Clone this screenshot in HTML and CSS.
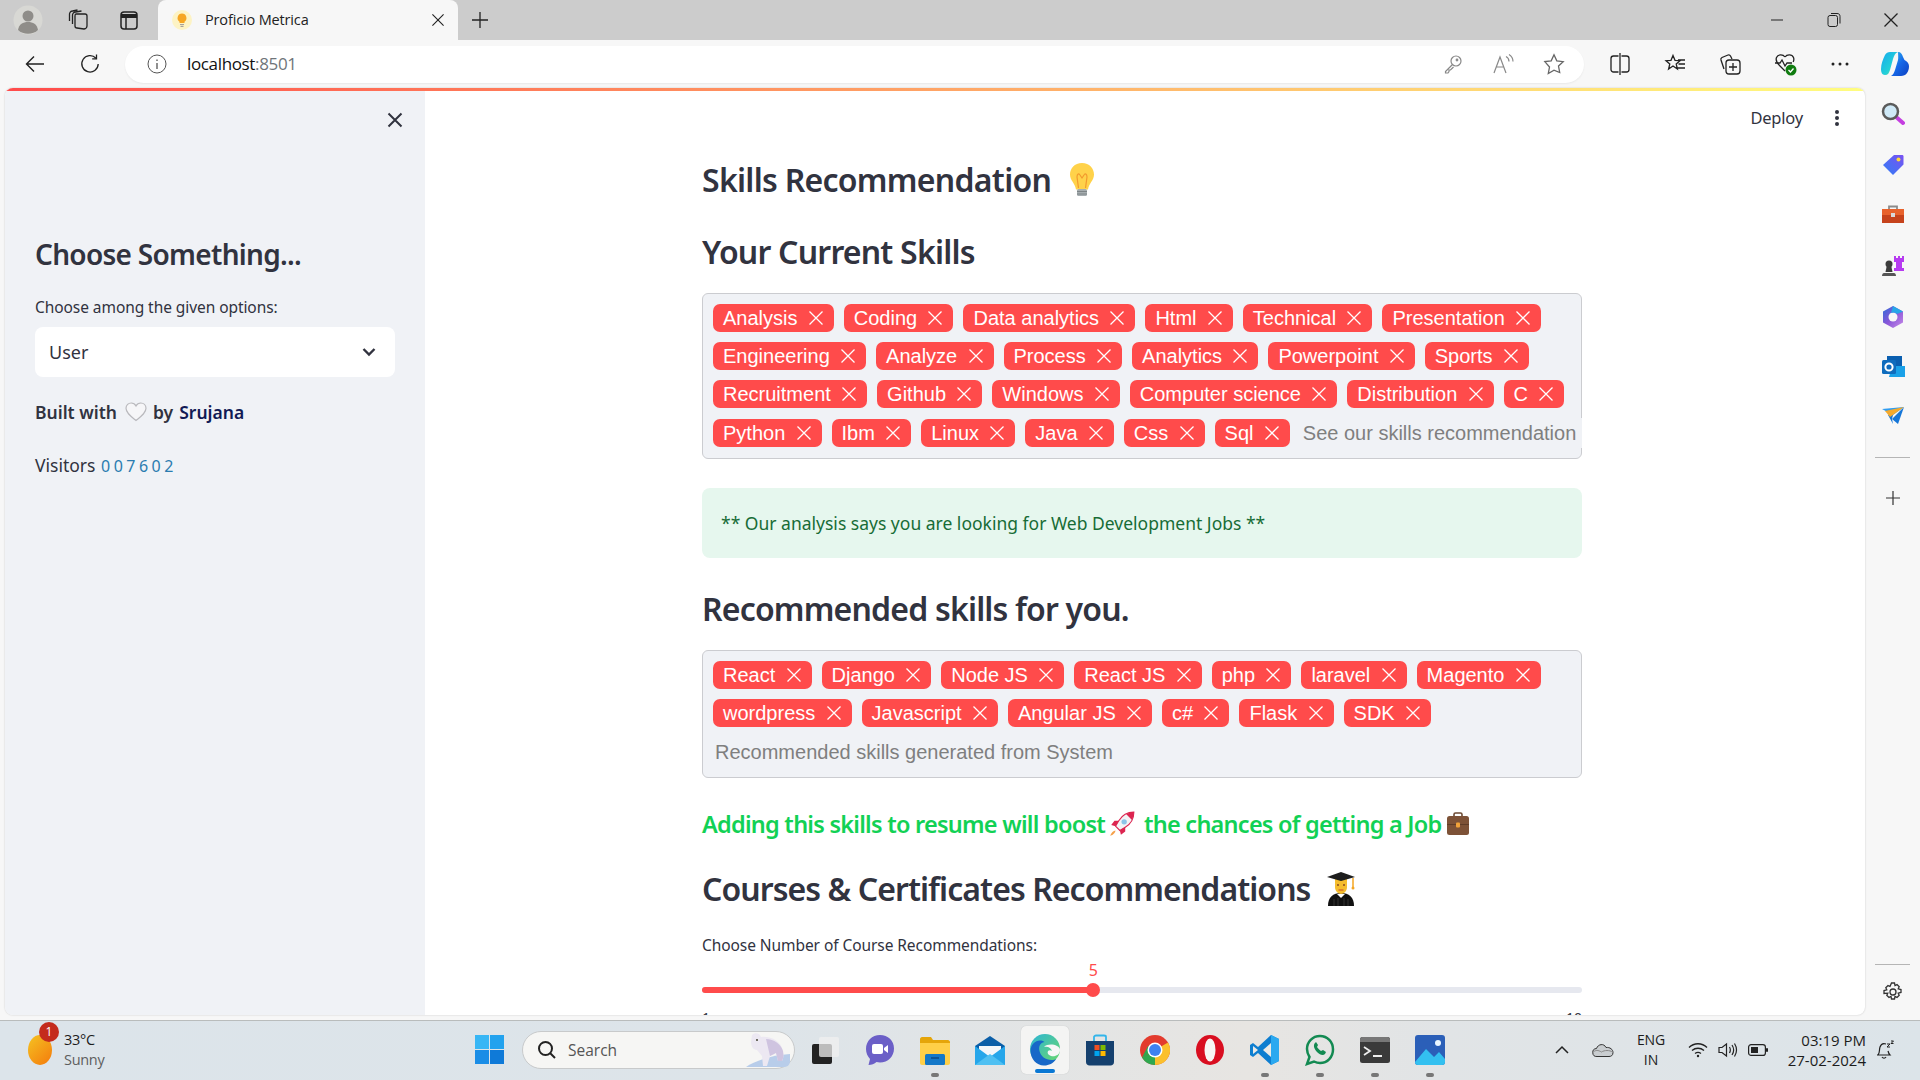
FILE: index.html
```html
<!DOCTYPE html>
<html lang="en">
<head>
<meta charset="utf-8">
<title>Proficio Metrica</title>
<link rel="stylesheet" href="styles.css">
</head>
<body>
<svg class="sprite" aria-hidden="true"><symbol id="x" viewBox="0 0 14 14"><path d="M.5.5l13 13M13.500.5l-13 13" fill="none" stroke="currentColor" stroke-width="1.300"/></symbol><symbol id="xb" viewBox="0 0 16 16"><path d="M1.500 1.500l13 13M14.500 1.500l-13 13" fill="none" stroke="currentColor" stroke-width="2"/></symbol></svg>

<header class="tabstrip">
  <div class="strip-btn avatar-wrap"><svg width="30" height="30" viewBox="0 0 30 30"><circle cx="15" cy="15" r="14.500" fill="#d8d8d4"/><circle cx="15" cy="11" r="5.500" fill="#8f8d89"/><path d="M5 25c1-6 5-8 10-8s9 2 10 8c-5 5-15 5-20 0z" fill="#8f8d89"/></svg></div>
  <div class="strip-btn workspaces"><svg width="22" height="22" viewBox="0 0 22 22" fill="none" stroke="#222" stroke-width="1.300"><path d="M9 5l9 0c1 0 2 1 2 2v10c0 2-2 3-3 3l-7-1c-1 0-2-1-2-2V7c0-1 0-2 1-2z"/><path d="M5.500 15V6c0-1 1-3 3-3l6-1M2.500 12V5c0-1 1-3 3-3l5-1"/></svg></div>
  <div class="strip-btn tabs-btn"><svg width="20" height="22" viewBox="0 0 20 22" fill="none" stroke="#222" stroke-width="1.500"><rect x="2" y="3" width="16" height="17" rx="3"/><path d="M2 7h16" stroke-width="4"/><path d="M7 7v13"/></svg></div>
  <div class="tab">
    <svg class="tab-fav" width="20" height="20" viewBox="0 0 20 20"><circle cx="10" cy="10" r="10" fill="#fdf3c4"/><path d="M10 3.500a4.500 4.500 0 0 0-2.500 8.200V13h5v-1.300A4.500 4.500 0 0 0 10 3.500z" fill="#f6a623"/><path d="M8 14.500h4M8.500 16.300h3" stroke="#a8a29a" stroke-width="1.200"/></svg>
    <span class="tab-title">Proficio Metrica</span>
    <svg class="tab-close" width="12" height="12" color="#222"><use href="#x"/></svg>
  </div>
  <svg class="new-tab" width="18" height="18" viewBox="0 0 18 18"><path d="M9 1v16M1 9h16" stroke="#222" stroke-width="1.300"/></svg>
  <div class="win-controls">
    <svg width="14" height="14" viewBox="0 0 14 14"><path d="M1 7h12" stroke="#222" stroke-width="1"/></svg>
    <svg width="14" height="16" viewBox="0 0 14 16" fill="none" stroke="#222" stroke-width="1"><rect x="1" y="3.500" width="9.500" height="11" rx="2"/><path d="M4 1.500h6c2 0 3 1 3 3v7"/></svg>
    <svg width="14" height="14" color="#222"><use href="#x"/></svg>
  </div>
</header>

<nav class="toolbar">
  <svg class="tool back" width="20" height="18" viewBox="0 0 20 18" fill="none" stroke="#222" stroke-width="1.400"><path d="M19 9H1.500M9 1.500L1.500 9 9 16.500"/></svg>
  <svg class="tool reload" width="20" height="20" viewBox="0 0 20 20" fill="none" stroke="#222" stroke-width="1.300"><path d="M16 4.200A8.200 8.200 0 1 0 18.200 10"/><path d="M16.500.5v4.300h-4.300"/></svg>
  <div class="address">
    <svg class="addr-info" width="20" height="20" viewBox="0 0 20 20" fill="none" stroke="#555" stroke-width="1"><circle cx="10" cy="10" r="9"/><path d="M10 9v6M10 5.500v1.500" stroke-width="1.300"/></svg>
    <span class="url">localhost<em>:8501</em></span>
    <div class="addr-right">
      <svg width="20" height="20" viewBox="0 0 20 20" fill="none" stroke="#888" stroke-width="1.200"><circle cx="13" cy="7" r="5"/><path d="M9.500 10.500L2.500 17.500v1.500h2.500l1-1.500v-1.500h1.500l3-3"/><circle cx="14" cy="6" r=".8"/></svg>
      <svg width="22" height="22" viewBox="0 0 22 22" fill="none" stroke="#888" stroke-width="1.200"><path d="M2 20L8 4l6 16M4.500 14h7"/><path d="M14 3.500c2 1 3 3 3 5M17 1.500c2.500 1.500 4 4 4 7"/></svg>
      <svg width="22" height="22" viewBox="0 0 22 22" fill="none" stroke="#666" stroke-width="1.300"><path d="M11 1.800l2.800 6 6.400.8-4.700 4.400 1.200 6.500L11 17.200l-5.700 3.300 1.200-6.500L1.800 8.600l6.400-.8z"/></svg>
    </div>
  </div>
  <div class="tool-group">
    <svg width="20" height="22" viewBox="0 0 20 22" fill="none" stroke="#222" stroke-width="1.300"><rect x="1" y="3" width="18" height="16" rx="2.500"/><path d="M10 0v22" stroke="#f7f7f7" stroke-width="3"/><path d="M10 0v22"/></svg>
    <svg width="22" height="22" viewBox="0 0 22 22" fill="none" stroke="#222" stroke-width="1.300"><path d="M9 2.500l2 4.800 5 .4-3.800 3.300 1.200 5L9 13l-4.400 3 1.200-5L2 7.700l5-.4zM14 7h7M14.500 11h6.500M13 15h8" /></svg>
    <svg width="22" height="22" viewBox="0 0 22 22" fill="none" stroke="#222" stroke-width="1.300"><path d="M5 16L2 7c-.3-1 0-2 1-2.500L9 2c1-.3 2 0 2.500 1L13 6"/><rect x="7" y="7" width="14" height="14" rx="3"/><path d="M14 10v8M10 14h8"/></svg>
    <svg width="24" height="24" viewBox="0 0 24 24"><path d="M12 5C10 2 5 2 3.500 5.500 2 9 5 12 7 14l5 5" fill="none" stroke="#222" stroke-width="1.300"/><path d="M12 5c2-3 7-3 8.500.5.600 1.500.4 3-.3 4.500M2 11h5l2-3 3 6 2-3h5" fill="none" stroke="#222" stroke-width="1.300"/><circle cx="18" cy="18" r="5.500" fill="#107c10"/><path d="M15.500 18l2 2 3-3.500" fill="none" stroke="#fff" stroke-width="1.300"/></svg>
    <svg width="20" height="6" viewBox="0 0 20 6" fill="#222"><circle cx="3" cy="3" r="1.500"/><circle cx="10" cy="3" r="1.500"/><circle cx="17" cy="3" r="1.500"/></svg>
    <svg width="30" height="30" viewBox="0 0 30 30"><defs><linearGradient id="cp1" x1="0" y1="0" x2="1" y2="1"><stop offset="0" stop-color="#18a8ee"/><stop offset=".6" stop-color="#22d0d8"/><stop offset="1" stop-color="#8fe27a"/></linearGradient><linearGradient id="cp2" x1="0" y1="0" x2="1" y2="1"><stop offset="0" stop-color="#2fc4f0"/><stop offset=".5" stop-color="#1668e8"/><stop offset="1" stop-color="#0d3fc0"/></linearGradient></defs><path d="M10 3h8c-3 1-4 4-5 7l-3 11c-1 3-2 5-5 5-3 0-4-3-4-6 0-5 2-10 4-14 1-2 3-3 5-3z" fill="url(#cp1)"/><path d="M18 3c3 0 4 2 5 5l1.500 3c2 1 4.500 3 4.500 6 0 6-3 10-8 10H11c2-1 3-3 4-6l3-10c.5-2 0-6 0-8z" fill="url(#cp2)"/></svg>
  </div>
</nav>

<div class="browser">
  <div class="viewport">
    <div class="rainbow"></div>
    <div class="app">
      <aside class="sidebar">
        <div class="side-top"><svg class="side-close" width="16" height="16" color="#31333f"><use href="#xb"/></svg></div>
        <h2 class="side-title">Choose Something...</h2>
        <label class="side-label">Choose among the given options:</label>
        <div class="select"><span>User</span><svg width="16" height="10" viewBox="0 0 16 10" fill="none" stroke="#31333f" stroke-width="2.400"><path d="M2.500 2l5.500 5.500L13.500 2"/></svg></div>
        <p class="built">Built with
          <svg class="heart" width="22" height="20" viewBox="0 0 22 20"><path d="M11 18.500C6 14.500 1 11 1 6.300 1 3 3.500 1 6.200 1 8.300 1 10 2 11 4c1-2 2.700-3 4.800-3C18.500 1 21 3 21 6.300c0 4.700-5 8.200-10 12.200z" fill="#f6f6f8" stroke="#b9b9bd" stroke-width="1.200"/></svg>
          by <b>Srujana</b></p>
        <p class="visitors">Visitors <span class="count">007602</span></p>
      </aside>
      <main class="main">
        <div class="main-head"><span class="deploy">Deploy</span><svg width="4" height="16" viewBox="0 0 4 16" fill="#31333f"><circle cx="2" cy="2" r="2"/><circle cx="2" cy="8" r="2"/><circle cx="2" cy="14" r="2"/></svg></div>
        <div class="column">
          <h1 class="h title">Skills Recommendation
            <svg class="emoji" width="28" height="36" viewBox="0 0 28 36"><path d="M14 1C6.500 1 2 6.500 2 12.500c0 6 5 8.500 6 15h12c1-6.500 6-9 6-15C26 6.500 21.500 1 14 1z" fill="#ffd24a"/><path d="M10.500 26l-1.500-11c0-3 2-4 3-2l2 3 2-3c1-2 3-1 3 2l-1.500 11" fill="none" stroke="#f29a2e" stroke-width="1.200"/><rect x="9" y="27" width="10" height="7" rx="1.500" fill="#a6adb0"/><path d="M9 29.500h10M9 32h10" stroke="#7d8487" stroke-width="1"/></svg>
          </h1>
          <h2 class="h skills-h">Your Current Skills</h2>
          <div class="tagbox">
            <span class="chip">Analysis<svg class="cx"><use href="#x"/></svg></span>
            <span class="chip">Coding<svg class="cx"><use href="#x"/></svg></span>
            <span class="chip">Data analytics<svg class="cx"><use href="#x"/></svg></span>
            <span class="chip">Html<svg class="cx"><use href="#x"/></svg></span>
            <span class="chip">Technical<svg class="cx"><use href="#x"/></svg></span>
            <span class="chip">Presentation<svg class="cx"><use href="#x"/></svg></span>
            <span class="chip">Engineering<svg class="cx"><use href="#x"/></svg></span>
            <span class="chip">Analyze<svg class="cx"><use href="#x"/></svg></span>
            <span class="chip">Process<svg class="cx"><use href="#x"/></svg></span>
            <span class="chip">Analytics<svg class="cx"><use href="#x"/></svg></span>
            <span class="chip">Powerpoint<svg class="cx"><use href="#x"/></svg></span>
            <span class="chip">Sports<svg class="cx"><use href="#x"/></svg></span>
            <span class="chip">Recruitment<svg class="cx"><use href="#x"/></svg></span>
            <span class="chip">Github<svg class="cx"><use href="#x"/></svg></span>
            <span class="chip">Windows<svg class="cx"><use href="#x"/></svg></span>
            <span class="chip">Computer science<svg class="cx"><use href="#x"/></svg></span>
            <span class="chip">Distribution<svg class="cx"><use href="#x"/></svg></span>
            <span class="chip">C<svg class="cx"><use href="#x"/></svg></span>
            <span class="chip">Python<svg class="cx"><use href="#x"/></svg></span>
            <span class="chip">Ibm<svg class="cx"><use href="#x"/></svg></span>
            <span class="chip">Linux<svg class="cx"><use href="#x"/></svg></span>
            <span class="chip">Java<svg class="cx"><use href="#x"/></svg></span>
            <span class="chip">Css<svg class="cx"><use href="#x"/></svg></span>
            <span class="chip">Sql<svg class="cx"><use href="#x"/></svg></span>
            <span class="placeholder inline">See our skills recommendation</span>
          </div>
          <div class="success">** Our analysis says you are looking for Web Development Jobs **</div>
          <h2 class="h rec-h">Recommended skills for you.</h2>
          <div class="tagbox">
            <span class="chip">React<svg class="cx"><use href="#x"/></svg></span>
            <span class="chip">Django<svg class="cx"><use href="#x"/></svg></span>
            <span class="chip">Node JS<svg class="cx"><use href="#x"/></svg></span>
            <span class="chip">React JS<svg class="cx"><use href="#x"/></svg></span>
            <span class="chip">php<svg class="cx"><use href="#x"/></svg></span>
            <span class="chip">laravel<svg class="cx"><use href="#x"/></svg></span>
            <span class="chip">Magento<svg class="cx"><use href="#x"/></svg></span>
            <span class="chip">wordpress<svg class="cx"><use href="#x"/></svg></span>
            <span class="chip">Javascript<svg class="cx"><use href="#x"/></svg></span>
            <span class="chip">Angular JS<svg class="cx"><use href="#x"/></svg></span>
            <span class="chip">c#<svg class="cx"><use href="#x"/></svg></span>
            <span class="chip">Flask<svg class="cx"><use href="#x"/></svg></span>
            <span class="chip">SDK<svg class="cx"><use href="#x"/></svg></span>
            <span class="placeholder full">Recommended skills generated from System</span>
          </div>
          <h4 class="boost">Adding this skills to resume will boost
            <svg class="emoji-sm" width="28" height="28" viewBox="0 0 26 26"><path d="M24 2c-6 0-11 3-14 8l-3 5 4 4 5-3c5-3 8-8 8-14z" fill="#f3f3f6" stroke="#dc2550" stroke-width="1"/><path d="M24 2c-3 0-5 .7-7 2l5 5c1.500-2 2-4.500 2-7z" fill="#dc2550"/><circle cx="15" cy="11" r="2.500" fill="#8cc4e8"/><path d="M10 10H6l-3 4 4 1zM16 16v4l-4 3-1-4z" fill="#dc2550"/><path d="M7 19c-2 0-4 2-5 5 3-1 5-3 5-5z" fill="#f5a04a"/></svg>
            <span class="boost-rest">the chances of getting a Job</span>
            <svg class="emoji-sm case" width="26" height="26" viewBox="0 0 26 26"><rect x="9" y="2" width="8" height="5" rx="1.500" fill="none" stroke="#6d4a33" stroke-width="1.600"/><rect x="2" y="5" width="22" height="19" rx="2.500" fill="#7d5237"/><rect x="2" y="13" width="22" height="1" fill="#5f3d28"/><rect x="11" y="11.500" width="4" height="5" rx="1" fill="#f2a33a"/></svg>
          </h4>
          <h2 class="h courses-h">Courses &amp; Certificates Recommendations
            <svg class="emoji grad" width="32" height="36" viewBox="0 0 32 36"><path d="M3 35c0-9 5-13 13-13s13 4 13 13z" fill="#111"/><path d="M10 8h12v8c0 4-3 7-6 7s-6-3-6-7z" fill="#f5bd2e"/><path d="M12 23l4 4 4-4z" fill="#fff"/><path d="M16 1L2 6l14 4 14-4z" fill="#1d1d1d"/><path d="M28 7v9" stroke="#f5a623" stroke-width="1.500"/><circle cx="28" cy="17" r="1.500" fill="#f5a623"/><circle cx="13" cy="14" r="1" fill="#8a4b20"/><circle cx="19" cy="14" r="1" fill="#8a4b20"/><path d="M13.500 19h5" stroke="#c94a2a"/><path d="M9 28v7M13 27v8M19 27v8M23 28v7" stroke="#333"/></svg>
          </h2>
          <label class="slider-label">Choose Number of Course Recommendations:</label>
          <div class="slider-value">5</div>
          <div class="track"><div class="fill"><span class="thumb"></span></div></div>
          <div class="ticks"><span>1</span><span>10</span></div>
        </div>
      </main>
    </div>
  </div>
  <aside class="edge">
    <svg width="24" height="24" viewBox="0 0 24 24"><path d="M14 14l8 7" stroke="#c43ee0" stroke-width="4" stroke-linecap="round"/><circle cx="9.500" cy="9.500" r="7.500" fill="#cfe9f7" stroke="#5b5b5b" stroke-width="2.500"/></svg>
    <svg width="24" height="24" viewBox="0 0 24 24"><defs><linearGradient id="ed1" x1="0" y1="1" x2="1" y2="0"><stop offset="0" stop-color="#2f7ef6"/><stop offset="1" stop-color="#7a52f2"/></linearGradient></defs><path d="M13 2h8c1 0 1.500.5 1.500 1.500v8L12 22 2 12z" fill="url(#ed1)"/><circle cx="17.500" cy="6.500" r="2" fill="#ffd83c"/></svg>
    <svg width="24" height="24" viewBox="0 0 24 24"><path d="M8 6V3.500h8V6" fill="none" stroke="#8b8b8b" stroke-width="1.800"/><path d="M1 6h22v6H1z" fill="#e8622c"/><path d="M1 12h22v8H1z" fill="#c6431c"/><rect x="10" y="10" width="4" height="4" fill="#d9d9d9"/></svg>
    <svg width="24" height="24" viewBox="0 0 24 24"><circle cx="8" cy="10" r="3.500" fill="#3c3c3c"/><path d="M5.500 13h5l1 5h-7z" fill="#3c3c3c"/><path d="M1 22c0-2 1-3 2-3h10c1 0 2 1 2 3z" fill="#555"/><path d="M13 2h2v2h2V2h2v2h2V2h2v6h-2v6h2v3H13v-3h2V8h-2z" fill="#b63bf0"/></svg>
    <svg width="24" height="24" viewBox="0 0 24 24"><defs><linearGradient id="m1" x1="0" y1="0" x2="1" y2="1"><stop offset="0" stop-color="#2b6bd8"/><stop offset=".5" stop-color="#8a56d8"/><stop offset="1" stop-color="#c98ce8"/></linearGradient></defs><path d="M12 1l10 5.500v11L12 23 2 17.500v-11z" fill="url(#m1)"/><circle cx="12" cy="12" r="4.500" fill="#f7f7f7"/><path d="M12 1l10 5.500-6 2.500a6 6 0 0 0-6-1z" fill="#27a6e8"/></svg>
    <svg width="24" height="24" viewBox="0 0 24 24"><rect x="6" y="1" width="15" height="10" fill="#0a5fb0"/><path d="M11 11h13v11H8z" fill="#1aa1e8"/><rect x="1" y="5" width="14" height="14" rx="1.500" fill="#0f6cbd"/><circle cx="8" cy="12" r="3.600" fill="none" stroke="#fff" stroke-width="2"/></svg>
    <svg width="24" height="20" viewBox="0 0 24 20"><path d="M1 3l22-2L12 9z" fill="#2e9cf0"/><path d="M23 1L17 18l-6-5z" fill="#1576d8"/><path d="M12 9l-1 4 1 5-5-9z" fill="#1576d8"/><path d="M4 5l19-4L9 11z" fill="#f4a92c"/></svg>
    <div class="edge-line"></div>
    <svg class="edge-plus" width="16" height="16" viewBox="0 0 16 16"><path d="M8 1v14M1 8h14" stroke="#333" stroke-width="1.200"/></svg>
    <div class="edge-spacer"></div>
    <div class="edge-line"></div>
    <svg class="gear" width="20" height="20" viewBox="0 0 20 20" fill="none" stroke="#333" stroke-width="1.300"><circle cx="10" cy="10" r="3"/><path d="M8.500 1h3l.5 2.500 2-.9 2.200 2.100-1 2.100 2.800.7v3l-2.800.7 1 2.100-2.200 2.100-2-.9-.5 2.500h-3l-.5-2.500-2 .9-2.200-2.100 1-2.100L1 11.500v-3l2.800-.7-1-2.100L5 3.600l2 .9z"/></svg>
  </aside>
</div>

<footer class="taskbar">
  <div class="weather">
    <div class="sun"><span class="badge">1</span></div>
    <div class="wtext"><span>33°C</span><span class="muted">Sunny</span></div>
  </div>
  <svg class="start" width="29" height="29" viewBox="0 0 29 29"><rect width="14" height="14" fill="#37b6f5"/><rect x="15" width="14" height="14" fill="#22a2ee"/><rect y="15" width="14" height="14" fill="#1a8de6"/><rect x="15" y="15" width="14" height="14" fill="#0f7ad8"/></svg>
  <div class="search">
    <svg width="20" height="20" viewBox="0 0 20 20" fill="none" stroke="#222" stroke-width="2"><circle cx="8.500" cy="8.500" r="6.500"/><path d="M13 13l5 5"/></svg>
    <span>Search</span>
    <svg class="bear" width="54" height="38" viewBox="0 0 54 38"><path d="M8 36c8-6 26-12 44-13v7c0 3-2 6-6 6z" fill="#b8cdea"/><path d="M14 4c3-3 8-2 9 2 10-1 20 4 22 14 1 5 0 8-1 10h-4l-2-8-6 3-3 10h-4l-1-10-5-6c-4 0-6-4-6-8z" fill="#ece8f2"/><path d="M28 8c8 0 15 5 17 12 1 5 0 8-1 10h-4l-2-8-6 3z" fill="#cfc4e0"/><circle cx="19" cy="9" r="1" fill="#443"/></svg>
  </div>
  <div class="apps">
    <div class="app-i"><svg width="30" height="30" viewBox="0 0 30 30"><rect x="2" y="9" width="20" height="20" rx="2" fill="#222"/><rect x="9" y="2" width="20" height="20" rx="2" fill="#f0f0f0" opacity=".75"/></svg></div>
    <div class="app-i"><svg width="30" height="32" viewBox="0 0 30 32"><path d="M15 1C7 1 1 7 1 15c0 4 1.500 7 4 10l-1.500 6c3 0 6-1 8-3 1 .3 2 .4 3.500.4 8 0 14-6 14-14S23 1 15 1z" fill="#6b5fc7"/><rect x="7" y="10" width="11" height="10" rx="2" fill="#fff"/><path d="M19 14l4-3v8l-4-3z" fill="#fff"/></svg></div>
    <div class="app-i dot"><svg width="30" height="30" viewBox="0 0 30 30"><path d="M0 4c0-1 1-2 2-2h9l2 3h15c1 0 2 1 2 2v21H0z" fill="#e5a50a"/><path d="M0 8h30v20c0 1-1 2-2 2H2c-1 0-2-1-2-2z" fill="#ffcf48"/><rect x="5" y="19" width="20" height="11" rx="1.500" fill="#1478c8"/><path d="M11 23h8" stroke="#0b4a86" stroke-width="1.500"/></svg></div>
    <div class="app-i"><svg width="30" height="30" viewBox="0 0 30 30"><path d="M0 11L15 1l15 10v19H0z" fill="#0a5ea8"/><path d="M4 11h22v8l-11 5-11-5z" fill="#f2f6fa"/><path d="M0 11l15 11 15-11v19H0z" fill="#26a6ea"/><path d="M0 30l15-11 15 11z" fill="#4fc0f2"/></svg></div>
    <div class="app-i active"><svg width="30" height="34" viewBox="0 0 30 34"><defs><linearGradient id="e1" x1="0" y1="0" x2="1" y2="1"><stop offset="0" stop-color="#2db5d6"/><stop offset="1" stop-color="#6bd96a"/></linearGradient></defs><circle cx="15" cy="16" r="15" fill="url(#e1)"/><path d="M.5 18c0-8 8-13 14-9-5 1-6 5-5 9 1 5 6 9 12 9 2 0 4-.5 5-1.500-3 5-8 7-12 7C7 33 .5 26 .5 18z" fill="#1768c8"/><path d="M30 17c0 5-5 7-9 6-3-1-4-3-3-5 1-1 3-1 4 0-1-3-4-5-8-4 3-3 9-3 13-1 2 1 3 2 3 4z" fill="#f7f7f7"/></svg></div>
    <div class="app-i"><svg width="30" height="32" viewBox="0 0 30 32"><path d="M9 7V3c0-1 1-1.500 2-1.500h8c1 0 2 .5 2 1.500v4" fill="none" stroke="#33b5ea" stroke-width="1.800"/><path d="M1 7h28v21c0 2-1.500 3.500-3.500 3.500h-21C2.500 31.500 1 30 1 28z" fill="#15406e"/><rect x="9.500" y="11" width="5" height="5" fill="#f25022"/><rect x="15.500" y="11" width="5" height="5" fill="#7fba00"/><rect x="9.500" y="17" width="5" height="5" fill="#00a4ef"/><rect x="15.500" y="17" width="5" height="5" fill="#ffb900"/></svg></div>
    <div class="app-i"><svg width="30" height="30" viewBox="0 0 30 30"><circle cx="15" cy="15" r="15" fill="#e33b2e"/><path d="M15 15L2 22.500A15 15 0 0 0 15 30z" fill="#2fa84f"/><path d="M15 15l0 15a15 15 0 0 0 13-22.500z" fill="#fbc02d"/><path d="M15 15L2 22.500 8 11z" fill="#2fa84f"/><circle cx="15" cy="15" r="7.500" fill="#fff"/><circle cx="15" cy="15" r="6" fill="#3f82f0"/></svg></div>
    <div class="app-i"><svg width="28" height="30" viewBox="0 0 28 30"><ellipse cx="14" cy="15" rx="14" ry="15" fill="#d90e20"/><ellipse cx="14" cy="15" rx="5.500" ry="11.500" fill="#f7f5f3"/></svg></div>
    <div class="app-i dot"><svg width="30" height="30" viewBox="0 0 30 30"><path d="M21 0l8 4v22l-8 4-13-12-5 4-3-2v-10l3-2 5 4z" fill="#0e7ed0"/><path d="M21 0l8 4v22l-8 4z" fill="#2aa9f0"/><path d="M21 8l-8 7 8 7z" fill="#eceae6"/><path d="M3 11l5 4-5 4z" fill="#eceae6"/></svg></div>
    <div class="app-i dot"><svg width="30" height="32" viewBox="0 0 30 32" fill="none"><path d="M15 2C7.500 2 2 8 2 15c0 3 1 5.500 2.500 8L2 30l7-2.500c2 1 4 1.500 6 1.500 7.500 0 13-6 13-13.500S22.500 2 15 2z" stroke="#138a52" stroke-width="2.500"/><path d="M10 9c-2 2-1 6 2 9s6 4 8 2l1-2-3-2-2 1c-2-1-3-3-4-4l1-2-2-3z" fill="#138a52"/></svg></div>
    <div class="app-i dot"><svg width="30" height="26" viewBox="0 0 30 26"><rect width="30" height="26" rx="2.500" fill="#3a3a3a"/><path d="M0 5V2.500C0 1 1 0 2.500 0h25C29 0 30 1 30 2.500V5z" fill="#777"/><path d="M4 10l6 4-6 4" fill="none" stroke="#eee" stroke-width="1.800"/><path d="M13 19h9" stroke="#eee" stroke-width="2"/></svg></div>
    <div class="app-i dot"><svg width="30" height="30" viewBox="0 0 30 30"><rect width="30" height="30" rx="3" fill="#2b5fb8"/><path d="M0 27l11-13 8 8 5-5 6 7v3a3 3 0 0 1-3 3H3a3 3 0 0 1-3-3z" fill="#33c0f0"/><circle cx="23" cy="8" r="3" fill="#eaf6ff"/></svg></div>
  </div>
  <div class="tray">
    <svg class="t-chev" width="14" height="10" viewBox="0 0 14 10" fill="none" stroke="#222" stroke-width="1.500"><path d="M1 8l6-6 6 6"/></svg>
    <svg class="t-cloud" width="22" height="14" viewBox="0 0 22 14"><path d="M5 13.500a4 4 0 0 1-.5-8C6 1 12 0 14 4.500c4-.5 7 2 7 5s-2 4-4 4z" fill="#c9cdd0" stroke="#333" stroke-width="1"/><path d="M1.500 9c3-3 6-1 8 0 3-2 8-2 11 0" fill="none" stroke="#888"/></svg>
    <div class="lang"><span>ENG</span><span>IN</span></div>
    <svg class="t-wifi" width="20" height="16" viewBox="0 0 20 16" fill="none" stroke="#222" stroke-width="1.300"><path d="M1 5.500c5-5 13-5 18 0M4 8.500c3.500-3 8.500-3 12 0M7 11.500c2-1.500 4-1.500 6 0"/><circle cx="10" cy="14" r="1.200" fill="#222" stroke="none"/></svg>
    <svg class="t-vol" width="20" height="16" viewBox="0 0 20 16" fill="none" stroke="#222" stroke-width="1.200"><path d="M1 5.500h3L8.500 2v12L4 10.500H1z"/><path d="M11.500 5c1 1.800 1 4.200 0 6M14 3c2 3 2 7 0 10M16.500 1.500c2.500 4 2.500 9 0 13"/></svg>
    <svg class="t-bat" width="20" height="12" viewBox="0 0 20 12" fill="none" stroke="#222" stroke-width="1.200"><rect x=".6" y=".6" width="16.800" height="10.800" rx="2.500"/><rect x="3" y="3" width="7" height="6" fill="#222" stroke="none"/><rect x="18" y="4" width="2" height="4" rx="1" fill="#222" stroke="none"/></svg>
    <div class="clock"><span>03:19 PM</span><span>27-02-2024</span></div>
    <svg class="t-bell" width="18" height="20" viewBox="0 0 18 20" fill="none" stroke="#222" stroke-width="1.200"><path d="M2 15c2-2 1-5 2-8s3-4 6-3M1 15h13c-1-1-1.500-2-2-4M6 17c1 1.500 3 1.500 4 0"/><path d="M11 4h3l-3 3h3M15 1h2.500L15 3.500h2.500" stroke-width="1"/></svg>
  </div>
</footer>
</body>
</html>
```

FILE: styles.css
```css
* { box-sizing: border-box; }
html, body { margin: 0; padding: 0; }
body { width: 1920px; height: 1080px; overflow: hidden; background: #f7f7f7; display: flex; flex-direction: column; font-family: "Noto Sans", sans-serif; color: #31333f; }
.sprite { display: none; }
svg { display: block; flex: none; }
p, h1, h2, h4 { margin: 0; }

.tabstrip { height: 40px; background: #cccccc; display: flex; align-items: center; flex: none; }
.strip-btn { display: flex; justify-content: center; align-items: center; height: 40px; }
.avatar-wrap { width: 30px; margin-left: 13px; }
.workspaces { width: 22px; margin-left: 24px; }
.tabs-btn { width: 20px; margin-left: 30px; }
.tab { width: 300px; height: 40px; margin-left: 19px; background: #f7f7f7; border-radius: 8px 8px 0 0; display: flex; align-items: center; padding: 0 14px; }
.tab-title { font: 14.500px "Open Sans", sans-serif; color: #222; margin-left: 13px; padding-bottom: 2px; flex: 1; letter-spacing: -.15px; }
.new-tab { margin-left: 13px; }
.win-controls { margin-left: auto; display: flex; align-items: center; gap: 43px; padding-right: 22px; }

.toolbar { height: 48px; background: #f7f7f7; display: flex; align-items: center; flex: none; }
.back { margin-left: 25px; }
.reload { margin-left: 35px; }
.address { width: 1459px; height: 37px; margin-left: 25px; background: #fff; border-radius: 19px; display: flex; align-items: center; box-shadow: 0 1px 2px rgba(0,0,0,.06); flex: none; }
.addr-info { margin-left: 22px; }
.url { font: 17px "Open Sans", sans-serif; color: #111; margin-left: 20px; padding-bottom: 2px; letter-spacing: -.35px; }
.url em { font-style: normal; color: #70757a; }
.addr-right { margin-left: auto; display: flex; align-items: center; gap: 29px; padding-right: 19px; }
.tool-group { margin-left: 8px; display: grid; grid-template-columns: repeat(6, 55px); justify-items: center; align-items: center; flex: none; }

.browser { display: flex; height: 932px; flex: none; }
.viewport { width: 1860px; height: 927px; margin-left: 5px; border-radius: 8px; overflow: hidden; background: #fff; display: flex; flex-direction: column; box-shadow: 0 0 2px rgba(0,0,0,.2); }
.rainbow { height: 3px; flex: none; background: linear-gradient(90deg, #ff4b4b, #fffd80); }
.app { display: flex; flex: 1; min-height: 0; }

.sidebar { width: 420px; background: #f0f2f6; padding: 0 30px; flex: none; }
.side-top { display: flex; justify-content: flex-end; padding-top: 21px; height: 37px; }
.side-close { margin-right: -8px; }
.side-title { margin-top: 106px; font-size: 28px; line-height: 40px; font-weight: 600; letter-spacing: -.7px; white-space: nowrap; }
.side-label { display: block; margin-top: 23px; font-size: 15.500px; line-height: 20px; letter-spacing: -.07px; white-space: nowrap; }
.select { margin-top: 10px; height: 50px; background: #fff; border-radius: 8px; display: flex; align-items: center; justify-content: space-between; padding: 0 18px 0 14px; font-size: 18px; }
.built { margin-top: 23px; height: 24px; display: flex; align-items: center; gap: 6px; font-size: 17.500px; font-weight: 600; }
.built b { font-weight: 600; color: #111a55; }
.heart { margin-left: 2px; }
.visitors { margin-top: 29px; line-height: 24px; font-size: 17.500px; }
.count { color: #2a7cb0; font-size: 16px; letter-spacing: 3.500px; margin-left: 1px; }

.main { flex: 1; min-width: 0; display: flex; flex-direction: column; }
.main-head { height: 54px; flex: none; display: flex; align-items: center; justify-content: flex-end; gap: 32px; padding-right: 26px; }
.deploy { font-size: 16.500px; letter-spacing: -.2px; padding-bottom: 2px; }
.column { width: 880px; margin-left: 277px; }
.h { font-weight: 600; line-height: 50px; color: #31333f; white-space: nowrap; display: flex; align-items: center; }
.title { margin-top: 10px; font-size: 32px; letter-spacing: -.72px; gap: 17px; }
.skills-h { margin-top: 22px; font-size: 32px; letter-spacing: -.8px; }
.rec-h { margin-top: 26px; font-size: 32px; letter-spacing: -.82px; }
.courses-h { margin-top: 22px; font-size: 32px; letter-spacing: -.94px; gap: 15px; }

.tagbox { margin-top: 16px; border: 1px solid #cbccd0; border-radius: 6px; background: #f0f2f6; padding: 10px; display: flex; flex-wrap: wrap; gap: 10px; align-items: center; font: 20px "Liberation Sans", sans-serif; }
.chip { height: 28px; border-radius: 7px; background: #ff4b4b; color: #fff; display: inline-flex; align-items: center; padding: 0 11px 0 10px; white-space: nowrap; }
.cx { width: 14px; height: 14px; margin-left: 11.300px; color: #fff; }
.placeholder { color: #7f7f7f; height: 30px; line-height: 30px; white-space: nowrap; }
.placeholder.inline { width: 282px; margin-right: -24px; padding-left: 3px; background: #f0f2f6; }
.placeholder.full { width: 100%; padding-left: 2px; }

.success { margin-top: 29px; height: 70px; border-radius: 8px; background: #e6f7ee; color: #176c36; display: flex; align-items: center; padding-left: 19px; font-size: 17.500px; }
.boost { margin-top: 28px; height: 36px; display: flex; align-items: center; color: #12d155; font-size: 23.500px; font-weight: 600; letter-spacing: -.76px; white-space: nowrap; }
.emoji-sm { margin-left: 3px; }
.boost-rest { margin-left: 8px; }
.case { margin-left: 3px; }
.slider-label { display: block; margin-top: 21px; line-height: 20px; font-size: 15.500px; letter-spacing: -.07px; white-space: nowrap; }
.slider-value { margin-top: 5px; line-height: 20px; width: 396px; text-align: right; color: #ff4b4b; font-size: 16px; }
.track { margin-top: 7px; height: 6px; border-radius: 3px; background: #e6e8ef; }
.fill { width: 44.400%; height: 6px; border-radius: 3px; background: #ff4b4b; position: relative; }
.thumb { position: absolute; right: -7px; top: -4px; width: 14px; height: 14px; border-radius: 50%; background: #ff4b4b; }
.ticks { margin-top: 15px; display: flex; justify-content: space-between; font-size: 14px; line-height: 20px; }

.edge { width: 55px; display: flex; flex-direction: column; align-items: center; padding-top: 14px; }
.edge > svg { margin-bottom: 26.700px; }
.edge-line { width: 35px; height: 1px; background: #b5b5b5; flex: none; }
.edge > .edge-line { margin-top: 4px; }
.edge > .edge-plus { margin-top: 32px; margin-bottom: 0; }
.edge-spacer { flex: 1; }
.edge > .gear { margin-top: 17px; margin-bottom: 18px; }

.taskbar { height: 60px; flex: none; border-top: 1px solid #b9bcbc; padding-bottom: 2px; background: linear-gradient(90deg, #dce4ea 0%, #dde4e9 40%, #e7e5e2 65%, #e1e4e6 75%, #dce4e9 100%); display: flex; align-items: center; font: 14px "Open Sans", sans-serif; color: #1c1c1c; }
.weather { width: 475px; display: flex; align-items: center; padding-left: 28px; flex: none; }
.sun { width: 24px; height: 30px; border-radius: 50%; background: linear-gradient(135deg, #f5c322, #f47a0c); position: relative; }
.badge { position: absolute; left: 11px; top: -13px; width: 20px; height: 20px; border-radius: 50%; background: #c42b1c; color: #fff; font-size: 12px; text-align: center; line-height: 20px; }
.wtext { margin-left: 12px; display: flex; flex-direction: column; line-height: 20px; font-size: 14.500px; letter-spacing: -.3px; }
.muted { color: #5e5e5e; }
.start { margin-right: 18px; }
.search { width: 273px; height: 38px; border-radius: 19px; background: #f6f6f4; border: 1px solid #c8cacb; display: flex; align-items: center; padding-left: 14px; flex: none; }
.search span { margin-left: 11px; font-size: 15.500px; color: #555; }
.bear { margin-left: auto; margin-right: 2px; }
.apps { display: flex; height: 48px; flex: none; margin-left: 2px; }
.app-i { width: 55px; height: 48px; display: flex; align-items: center; justify-content: center; position: relative; }
.app-i.dot::after { content: ""; position: absolute; left: 24px; bottom: -3px; width: 8px; height: 4px; border-radius: 2px; background: #777; }
.app-i.active { width: 48px; margin: 0 3.500px; background: #f4f4f3; border-radius: 5px; box-shadow: 0 0 1px rgba(0,0,0,.2); }
.app-i.active::after { content: ""; position: absolute; left: 14px; bottom: 1px; width: 20px; height: 4px; border-radius: 2px; background: #0a78d4; }
.tray { flex: 1; display: flex; align-items: center; }
.t-chev { margin-left: 98px; }
.t-cloud { margin-left: 23px; }
.lang { margin-left: 17px; width: 40px; display: flex; flex-direction: column; align-items: center; line-height: 20px; font-size: 14px; letter-spacing: -.1px; }
.t-wifi { margin-left: 17px; }
.t-vol { margin-left: 10px; }
.t-bat { margin-left: 10px; }
.clock { margin-left: 20px; width: 78px; display: flex; flex-direction: column; align-items: flex-end; line-height: 20px; font-size: 15px; white-space: nowrap; }
.t-bell { margin-left: 10px; }
```
